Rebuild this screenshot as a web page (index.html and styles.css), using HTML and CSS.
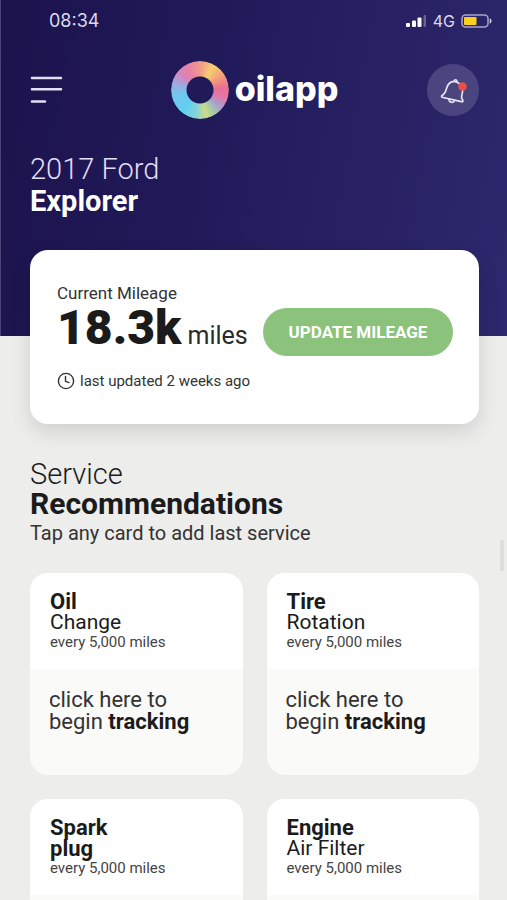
FILE: index.html
```html
<!DOCTYPE html>
<html lang="en">
<head>
<meta charset="utf-8">
<meta name="viewport" content="width=device-width, initial-scale=1">
<title>oilapp</title>
<link rel="stylesheet" href="styles.css">
</head>
<body>
<div class="app">
  <header class="hero">
    <div class="status">
      <span class="status-time">08:34</span>
      <div class="status-right">
        <svg class="signal" width="21" height="12" viewBox="0 0 21 12" aria-hidden="true">
          <rect x="0" y="8" width="4" height="4" rx="1"/>
          <rect x="6" y="5.500" width="4" height="6.500" rx="1"/>
          <rect x="11.500" y="2.500" width="4" height="9.500" rx="1"/>
          <rect x="17.500" y="0" width="2.500" height="12" rx="1" opacity=".3"/>
        </svg>
        <span class="network">4G</span>
        <svg width="32" height="14" viewBox="0 0 32 14" aria-hidden="true">
          <rect x="1" y="1" width="26" height="12" rx="3.500" fill="none" stroke="#a9a5cb" stroke-width="1.500"/>
          <rect x="3" y="3" width="12.500" height="8" rx="1" fill="#fbd11d"/>
          <path d="M28.700 4.500v5c1.200-.3 1.800-1.200 1.800-2.500s-.6-2.200-1.800-2.500z" fill="#d5d3e6"/>
        </svg>
      </div>
    </div>
    <nav class="topbar">
      <button class="menu" type="button" aria-label="Menu">
        <svg width="34" height="30" viewBox="0 0 34 30" fill="none" stroke="#e4e0f3" stroke-width="2.600" stroke-linecap="round">
          <path d="M2 3h29M2 14.200h29M2 26.500h13"/>
        </svg>
      </button>
      <a class="brand" href="#">
        <span class="ring"></span>
        <span class="brand-name">oilapp</span>
      </a>
      <button class="bell" type="button" aria-label="Notifications">
        <svg width="52" height="52" viewBox="0 0 52 52" fill="none" stroke="#e6e3f5" stroke-width="1.700" stroke-linejoin="round" stroke-linecap="round">
          <path d="M27.300 16.700c.3-1.300 2.200-1.300 2.500.2M27.300 17.300c-4.600.2-6.700 3.100-7.700 7-.6 2.500-1.200 4.500-2.800 5.800-1.400 1.200-2.500 1.500-2.300 2.500.1.500.7.700 1.500.9l18.400 4.200c1 .2 1.500-.1 1.500-.8 0-1.300-1.300-1.900-1.300-3.700 0-2.400 1.100-4.100 1-6.800-.2-4.700-3.600-8.400-8.300-9.100z"/>
          <path d="M22 35.200c.1 3.500 4.400 4.300 5.800 1.300"/>
          <circle cx="35.500" cy="22.500" r="4.300" fill="#ed4c47" stroke="none"/>
        </svg>
      </button>
    </nav>
    <h1 class="vehicle"><span>2017 Ford</span> <b>Explorer</b></h1>
  </header>

  <main class="content">
    <section class="mileage">
      <div>
        <p class="mileage-label">Current Mileage</p>
        <p class="mileage-value"><b>18.3k</b> <span>miles</span></p>
        <p class="updated">
          <svg width="18" height="18" viewBox="0 0 18 18" fill="none" stroke="#333" stroke-width="1.400" stroke-linecap="round" aria-hidden="true">
            <circle cx="9" cy="9" r="7.600"/><path d="M8.500 4.500v4.800l3.500 1.300"/>
          </svg>
          last updated 2 weeks ago
        </p>
      </div>
      <button class="update" type="button">UPDATE MILEAGE</button>
    </section>

    <section class="services">
      <h2 class="services-title"><span>Service</span> <b>Recommendations</b></h2>
      <p class="services-hint">Tap any card to add last service</p>
      <div class="grid">
        <a class="card" href="#">
          <div class="card-head"><h3><b>Oil</b><span>Change</span></h3><p>every 5,000 miles</p></div>
          <p class="card-body">click here to begin <b>tracking</b></p>
        </a>
        <a class="card" href="#">
          <div class="card-head"><h3><b>Tire</b><span>Rotation</span></h3><p>every 5,000 miles</p></div>
          <p class="card-body">click here to begin <b>tracking</b></p>
        </a>
        <a class="card" href="#">
          <div class="card-head"><h3><b>Spark</b><b>plug</b></h3><p>every 5,000 miles</p></div>
        </a>
        <a class="card" href="#">
          <div class="card-head"><h3><b>Engine</b><span>Air Filter</span></h3><p>every 5,000 miles</p></div>
        </a>
      </div>
    </section>
  </main>
  <div class="scroll-thumb"></div>
</div>
</body>
</html>
```
FILE: styles.css
```css
* {
  box-sizing: border-box;
  margin: 0;
  padding: 0;
}

body {
  font-family: Roboto, "Liberation Sans", sans-serif;
  color: #1b1b1b;
  background: #ededeb;
}

button {
  border: 0;
  background: none;
  font: inherit;
}

a {
  color: inherit;
  text-decoration: none;
}

b {
  font-weight: 700;
}

.app {
  position: relative;
  height: 100vh;
  overflow: hidden;
}

.hero {
  padding: 10px 28px 119px 29px;
  color: #fff;
  background: linear-gradient(100deg, #1c134c, #211a59 40%, #2d286d);
  border-left: 1px solid #494475;
}

.status {
  display: flex;
  justify-content: space-between;
  align-items: center;
  height: 22px;
  padding-left: 19px;
  margin-right: -14px;
  color: #dcd9ee;
}

.status-time {
  font: 18px/22px Inter, sans-serif;
}

.status-right {
  display: flex;
  align-items: center;
  gap: 6px;
}

.signal {
  fill: #fff;
}

.network {
  font: 16px/22px Inter, sans-serif;
}

.topbar {
  display: flex;
  justify-content: space-between;
  align-items: center;
  margin-top: 29px;
}

.menu svg,
.bell svg {
  display: block;
}

.menu {
  width: 52px;
}

.brand {
  display: flex;
  align-items: center;
  gap: 6px;
}

.ring {
  width: 58px;
  height: 58px;
  border-radius: 50%;
  background: conic-gradient(#f09a8c, #f8cd70 28deg, #f3a07a 55deg, #ea6f94 85deg, #e478a6 108deg, #a5a0cf 130deg, #a8cfa0 152deg, #cfd986 166deg, #84d3d8 190deg, #63cff0 220deg, #74c4ee 262deg, #9fa9de 285deg, #d983bb 310deg, #e681a8 330deg, #f09a8c);
  mask: radial-gradient(circle, transparent 13px, #000 14px);
}

.brand-name {
  padding-bottom: 2px;
  font: 800 34px/56px Inter, sans-serif;
}

.bell {
  width: 52px;
  height: 52px;
  border-radius: 50%;
  background: #4b457f;
}

.vehicle {
  margin-top: 34px;
  font-size: 29px;
  line-height: 32px;
  font-weight: 300;
}

.vehicle span,
.vehicle b,
.services-title span,
.services-title b,
.card h3 b,
.card h3 span {
  display: block;
}

.vehicle span {
  color: #e2def3;
}

.content {
  padding: 0 28px 0 30px;
}

.mileage {
  position: relative;
  display: flex;
  justify-content: space-between;
  align-items: center;
  margin-top: -86px;
  padding: 31px 26px 32px 27px;
  border-radius: 18px;
  background: #fff;
  box-shadow: 0 8px 20px rgba(0, 0, 0, .12);
}

.mileage-label {
  font-size: 17px;
  line-height: 24px;
  color: #333;
}

.mileage-value {
  font-size: 25px;
  line-height: 46px;
  color: #2b2b2b;
}

.mileage-value b {
  font-size: 48px;
  font-weight: 900;
  color: #1b1b1b;
}

.updated {
  display: flex;
  align-items: center;
  gap: 5px;
  margin-top: 11px;
  font-size: 15px;
  line-height: 22px;
  color: #333;
}

.update {
  width: 190px;
  height: 48px;
  margin-bottom: 10px;
  border-radius: 24px;
  background: #8bc37c;
  color: #fff;
  font-size: 17px;
  font-weight: 700;
}

.services {
  padding-top: 36px;
}

.services-title {
  font-size: 29px;
  line-height: 29px;
  font-weight: 300;
}

.services-title b {
  font-size: 30px;
}

.services-hint {
  margin-top: 3px;
  font-size: 20px;
  line-height: 24px;
  color: #333;
}

.grid {
  display: grid;
  grid-template-columns: 1fr 1fr;
  gap: 24px;
  margin-top: 28px;
}

.card {
  min-height: 202px;
  border-radius: 18px;
  overflow: hidden;
  background: #fafaf8;
}

.card-head {
  height: 96px;
  padding: 18px 20px 0;
  background: #fff;
}

.card h3 {
  font-size: 21px;
  line-height: 21px;
  font-weight: 400;
}

.card h3 b {
  font-size: 22px;
}

.card-head p {
  font-size: 15px;
  line-height: 18px;
  color: #444;
}

.card-body {
  max-width: 180px;
  padding: 20px 0 0 19px;
  font-size: 22px;
  line-height: 22px;
  color: #333;
}

.card b {
  color: #1b1b1b;
}

.scroll-thumb {
  position: absolute;
  top: 540px;
  right: 3px;
  width: 4px;
  height: 31px;
  background: #dededd;
}
```
